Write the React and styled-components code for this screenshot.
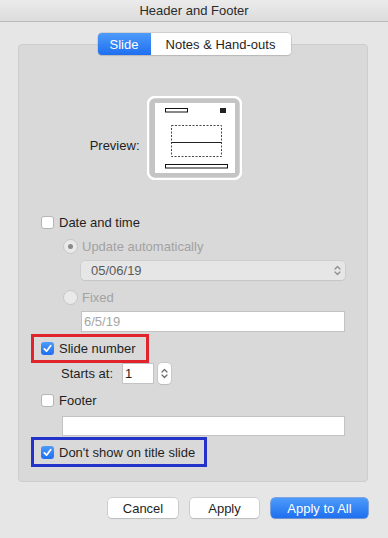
import React from "react";
import styled, { createGlobalStyle } from "styled-components";

const GlobalStyle = createGlobalStyle`
  html, body {
    margin: 0;
    padding: 0;
    background: #e6e6e6;
  }
  body {
    font-family: "Liberation Sans", Arial, sans-serif;
    font-size: 13px;
    color: #1f1f1f;
  }
`;

const Window = styled.div`
  width: 388px;
  height: 538px;
  background: #e6e6e6;
  display: flex;
  flex-direction: column;
  overflow: hidden;
`;

const TitleBar = styled.div`
  height: 21px;
  border-bottom: 1px solid #b9b9b9;
  background: linear-gradient(#ebebeb, #dcdcdc);
  display: flex;
  align-items: center;
  justify-content: center;
  font-size: 13px;
  color: #2b2b2b;
`;

const Body = styled.div`
  padding: 11px 20px 0 18px;
  display: flex;
  flex-direction: column;
`;

const Tabs = styled.div`
  align-self: center;
  margin-left: 2px;
  display: flex;
  height: 22px;
  margin-bottom: -11px;
  position: relative;
  z-index: 1;
  border-radius: 4px;
  box-shadow: 0 0 0 0.5px #b8b8b8, 0 1px 1px rgba(0, 0, 0, 0.15);
  overflow: hidden;
`;

const Tab = styled.div`
  display: flex;
  align-items: center;
  justify-content: center;
  width: ${(p) => p.$w}px;
  font-size: 13px;
  background: ${(p) => (p.$active ? "linear-gradient(#4d9bfa, #1f6ff0)" : "#ffffff")};
  color: ${(p) => (p.$active ? "#ffffff" : "#1f1f1f")};
`;

const Panel = styled.div`
  background: #d9d9d9;
  border: 1px solid #cdcdcd;
  border-radius: 4px;
  padding: 51px 0 14px 12px;
  display: flex;
  flex-direction: column;
`;

const PreviewRow = styled.div`
  display: grid;
  grid-template-columns: 1fr auto 1fr;
  align-items: center;
  margin-left: -12px;
  column-gap: 5px;
`;

const PreviewLabel = styled.div`
  justify-self: end;
  font-size: 13px;
  padding-top: 14px;
`;

const PreviewFrame = styled.div`
  width: 95px;
  height: 84px;
  margin-left: 2px;
`;

const Row = styled.div`
  display: flex;
  align-items: center;
  height: ${(p) => p.$h || 20}px;
  margin-top: ${(p) => p.$top || 0}px;
  padding-left: ${(p) => p.$indent || 0}px;
  color: ${(p) => (p.$disabled ? "#a2a2a2" : "#1f1f1f")};
  gap: ${(p) => p.$gap || 5}px;
`;

const Highlight = styled.div`
  display: flex;
  align-items: center;
  gap: 5px;
  width: fit-content;
  height: ${(p) => p.$h}px;
  box-sizing: border-box;
  margin-top: ${(p) => p.$top}px;
  border: 3px solid ${(p) => p.$color};
  padding: 0 ${(p) => p.$pr}px 0 7px;
`;

const Box = styled.span`
  width: 13px;
  height: 13px;
  box-sizing: border-box;
  border-radius: 3px;
  display: inline-flex;
  align-items: center;
  justify-content: center;
  background: ${(p) => (p.$checked ? "linear-gradient(#4d9bfa, #1f6ff0)" : "#ffffff")};
  border: ${(p) => (p.$checked ? "none" : "1px solid #b5b5b5")};
  flex-shrink: 0;
`;

const Radio = styled.span`
  width: 15px;
  height: 15px;
  box-sizing: border-box;
  border-radius: 50%;
  border: 1px solid #c6c6c6;
  background: #e9e9e9;
  display: inline-flex;
  align-items: center;
  justify-content: center;
  flex-shrink: 0;

  &::after {
    content: "";
    display: ${(p) => (p.$on ? "block" : "none")};
    width: 5px;
    height: 5px;
    border-radius: 50%;
    background: #8a8a8a;
  }
`;

const Select = styled.div`
  margin-left: 50px;
  margin-top: ${(p) => p.$top}px;
  width: 264px;
  height: 19px;
  box-sizing: border-box;
  border-radius: 4px;
  background: #e6e6e6;
  box-shadow: 0 0 0 0.5px #c4c4c4, 0 1px 1px rgba(0, 0, 0, 0.08);
  display: flex;
  align-items: center;
  justify-content: space-between;
  padding: 0 4px 0 10px;
  color: #5a5a5a;
  font-size: 13px;
`;

const Field = styled.div`
  margin-left: ${(p) => p.$left}px;
  margin-top: ${(p) => p.$top}px;
  width: ${(p) => p.$w}px;
  height: ${(p) => p.$h}px;
  box-sizing: border-box;
  background: #ffffff;
  border: 1px solid #c3c3c3;
  display: flex;
  align-items: center;
  padding-left: 2px;
  color: ${(p) => (p.$muted ? "#a6a6a6" : "#1f1f1f")};
  font-size: 13px;
`;

const Stepper = styled.div`
  width: 13px;
  height: 21px;
  box-sizing: border-box;
  border-radius: 4px;
  background: #ffffff;
  box-shadow: 0 0 0 0.5px #b8b8b8, 0 1px 1px rgba(0, 0, 0, 0.12);
  display: flex;
  align-items: center;
  justify-content: center;
  margin-left: -2px;
`;

const Footer = styled.div`
  display: flex;
  justify-content: flex-end;
  gap: 12px;
  margin-top: 16px;
`;

const Button = styled.div`
  width: ${(p) => p.$w}px;
  height: 20px;
  border-radius: 4px;
  display: flex;
  align-items: center;
  justify-content: center;
  font-size: 13px;
  background: ${(p) => (p.$primary ? "linear-gradient(#4d9bfa, #1f6ff0)" : "#ffffff")};
  color: ${(p) => (p.$primary ? "#ffffff" : "#1f1f1f")};
  box-shadow: 0 0 0 0.5px ${(p) => (p.$primary ? "#1a63d8" : "#b8b8b8")},
    0 1px 1px rgba(0, 0, 0, 0.15);
`;

const Check = () => (
  <svg width="9" height="9" viewBox="0 0 9 9">
    <path d="M1.3 4.8 L3.6 7.2 L7.8 1.6" fill="none" stroke="#ffffff" strokeWidth="1.7" strokeLinecap="round" strokeLinejoin="round" />
  </svg>
);

const UpDown = ({ color = "#6a6a6a" }) => (
  <svg width="7" height="11" viewBox="0 0 7 11">
    <path d="M1 4 L3.5 1.5 L6 4 M1 7 L3.5 9.5 L6 7" fill="none" stroke={color} strokeWidth="1.2" strokeLinecap="round" strokeLinejoin="round" />
  </svg>
);

const SlidePreview = () => (
  <svg width="95" height="84" viewBox="0 0 95 84">
    <rect x="1" y="1" width="93" height="82" rx="7" fill="#c4c4c4" stroke="#ffffff" strokeWidth="2.5" />
    <rect x="8" y="7" width="80" height="70" fill="#ffffff" />
    <rect x="18.5" y="12.5" width="22" height="3.5" fill="none" stroke="#111" strokeWidth="1" />
    <rect x="73" y="12" width="6" height="5" fill="#222" />
    <rect x="24.5" y="29.5" width="50" height="31" fill="none" stroke="#333" strokeWidth="0.9" strokeDasharray="2 1.5" />
    <line x1="24.5" y1="46.5" x2="74.5" y2="46.5" stroke="#222" strokeWidth="1" />
    <rect x="18.5" y="68.5" width="62" height="3.5" fill="none" stroke="#111" strokeWidth="1" />
  </svg>
);

export default function App() {
  return (
    <Window>
      <GlobalStyle />
      <TitleBar>Header and Footer</TitleBar>
      <Body>
        <Tabs>
          <Tab $active $w={53}>Slide</Tab>
          <Tab $w={140}>Notes &amp; Hand-outs</Tab>
        </Tabs>
        <Panel>
          <PreviewRow>
            <PreviewLabel>Preview:</PreviewLabel>
            <PreviewFrame>
              <SlidePreview />
            </PreviewFrame>
            <div />
          </PreviewRow>

          <Row $top={32} $indent={10}>
            <Box />
            <span>Date and time</span>
          </Row>
          <Row $top={4} $indent={32} $gap={4} $disabled>
            <Radio $on />
            <span>Update automatically</span>
          </Row>
          <Select $top={5}>
            <span>05/06/19</span>
            <UpDown color="#8c8c8c" />
          </Select>
          <Row $top={7} $indent={32} $gap={4} $disabled>
            <Radio />
            <span>Fixed</span>
          </Row>
          <Field $left={50} $top={4} $w={264} $h={21} $muted>
            6/5/19
          </Field>

          <Highlight $color="#e1232b" $h={29} $top={2} $pr={10}>
            <Box $checked>
              <Check />
            </Box>
            <span>Slide number</span>
          </Highlight>
          <Row $h={21} $indent={30} $gap={6}>
            <span>Starts at:</span>
            <Field $left={3} $top={0} $w={32} $h={21}>
              1
            </Field>
            <Stepper>
              <UpDown />
            </Stepper>
          </Row>
          <Row $top={6} $indent={10}>
            <Box />
            <span>Footer</span>
          </Row>
          <Field $left={31} $top={6} $w={283} $h={20} />
          <Highlight $color="#2432c9" $h={30} $top={1} $pr={9}>
            <Box $checked>
              <Check />
            </Box>
            <span>Don&apos;t show on title slide</span>
          </Highlight>
        </Panel>
        <Footer>
          <Button $w={70}>Cancel</Button>
          <Button $w={69}>Apply</Button>
          <Button $w={97} $primary>
            Apply to All
          </Button>
        </Footer>
      </Body>
    </Window>
  );
}
